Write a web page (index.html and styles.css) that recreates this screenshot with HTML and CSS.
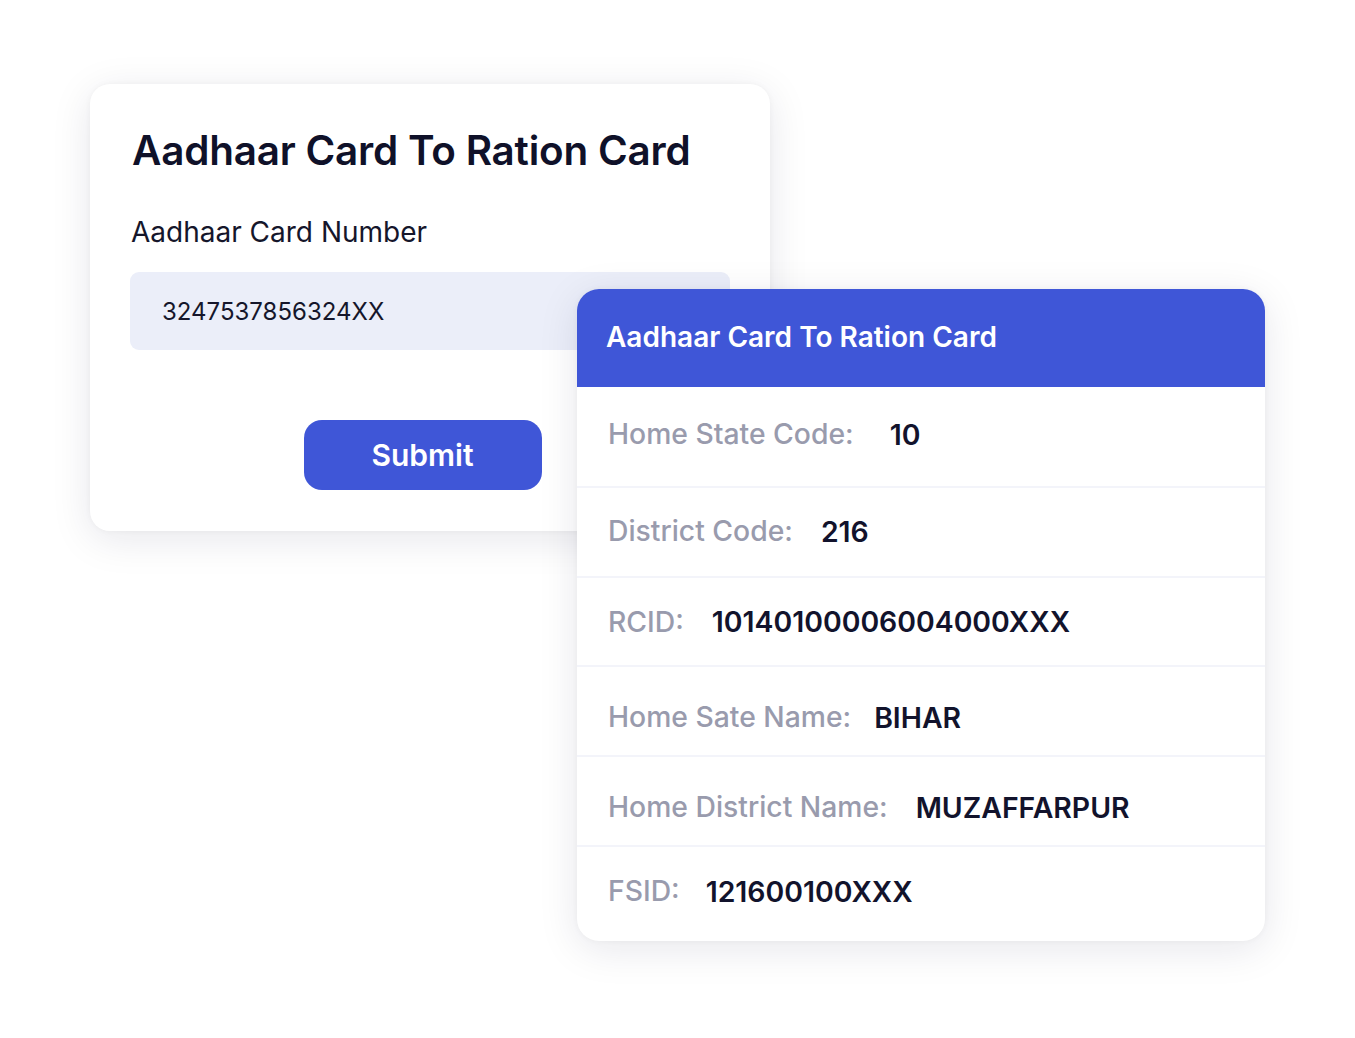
FILE: index.html
```html
<!DOCTYPE html>
<html lang="en">
<head>
<meta charset="utf-8">
<title>Aadhaar Card To Ration Card</title>
<link rel="stylesheet" href="styles.css">
</head>
<body>
<div class="canvas">
  <section class="form-card">
    <h1 class="form-title">Aadhaar Card To Ration Card</h1>
    <label class="form-label" for="aadhaar">Aadhaar Card Number</label>
    <div class="form-input" id="aadhaar">3247537856324XX</div>
    <div class="form-actions">
      <button class="submit-btn" type="button">Submit</button>
    </div>
  </section>

  <section class="result-card">
    <header class="result-head">Aadhaar Card To Ration Card</header>
    <div class="result-row r1"><span class="k">Home State Code:</span><span class="v v-wide">10</span></div>
    <div class="result-row r2"><span class="k">District Code:</span><span class="v">216</span></div>
    <div class="result-row r3"><span class="k">RCID:</span><span class="v">10140100006004000XXX</span></div>
    <div class="result-row r4"><span class="k">Home Sate Name:</span><span class="v v-tight">BIHAR</span></div>
    <div class="result-row r5"><span class="k">Home District Name:</span><span class="v">MUZAFFARPUR</span></div>
    <div class="result-row r6"><span class="k">FSID:</span><span class="v v-fsid">121600100XXX</span></div>
  </section>
</div>
</body>
</html>
```

FILE: styles.css
```css
* { box-sizing: border-box; }
html, body {
  margin: 0;
  padding: 0;
  background: #ffffff;
  font-family: Inter, "Noto Sans", "Liberation Sans", sans-serif;
}
.canvas {
  position: relative;
  width: 1355px;
  height: 1038px;
  overflow: hidden;
}

/* Form card (back window) */
.form-card {
  position: absolute;
  left: 90px;
  top: 84px;
  width: 680px;
  height: 447px;
  background: #ffffff;
  border-radius: 20px;
  box-shadow: 0 8px 40px rgba(20, 24, 60, 0.10), 0 0 6px rgba(20, 24, 60, 0.04);
  padding: 41px 40px 0 40px;
  display: flex;
  flex-direction: column;
}
.form-title {
  margin: 0 0 0 2px;
  font-size: 40.4px;
  line-height: 52px;
  font-weight: 600;
  color: #0f1129;
  letter-spacing: -0.2px;
}
.form-label {
  margin: 38px 0 0 1px;
  font-size: 28px;
  line-height: 34px;
  font-weight: 400;
  color: #15162b;
}
.form-input {
  margin-top: 23px;
  height: 78px;
  background: #ebeef9;
  border-radius: 9px;
  padding: 0 32px;
  display: flex;
  align-items: center;
  font-size: 24px;
  color: #15162b;
}
.form-actions {
  margin-top: 70px;
  display: flex;
  justify-content: center;
}
.submit-btn {
  width: 238px;
  height: 70px;
  margin-left: -15px;
  border: none;
  border-radius: 18px;
  background: #3f56d7;
  color: #ffffff;
  font-family: inherit;
  font-size: 30px;
  font-weight: 600;
}

/* Result card (front window) */
.result-card {
  position: absolute;
  left: 577px;
  top: 289px;
  width: 688px;
  height: 652px;
  background: #ffffff;
  border-radius: 22px;
  overflow: hidden;
  box-shadow: 0 8px 40px rgba(20, 24, 60, 0.10), 0 0 6px rgba(20, 24, 60, 0.04);
  display: flex;
  flex-direction: column;
}
.result-head {
  height: 98px;
  flex: none;
  background: #3f56d7;
  color: #ffffff;
  font-size: 28px;
  font-weight: 600;
  padding: 0 30px 2px 29px;
  display: flex;
  align-items: center;
}
.result-row {
  flex: none;
  display: flex;
  align-items: center;
  padding: 0 31px;
  border-bottom: 2px solid #f3f4fa;
}
.result-row:last-child { border-bottom: none; flex: 1; }
.r1 { height: 101px; padding-bottom: 5px; }
.r2 { height: 90px; padding-bottom: 2px; }
.r3 { height: 89px; padding-bottom: 0; }
.r4 { height: 90px; padding-top: 12px; }
.r5 { height: 90px; padding-top: 12px; }
.r6 { padding-bottom: 6px; }
.k {
  font-size: 28.3px;
  font-weight: 500;
  color: #999bad;
}
.v {
  margin-left: 28px;
  font-size: 28.4px;
  font-weight: 600;
  color: #12132c;
}
.v-wide { margin-left: 36px; }
.v-tight { margin-left: 23px; }
.v-fsid { margin-left: 26px; }
```
